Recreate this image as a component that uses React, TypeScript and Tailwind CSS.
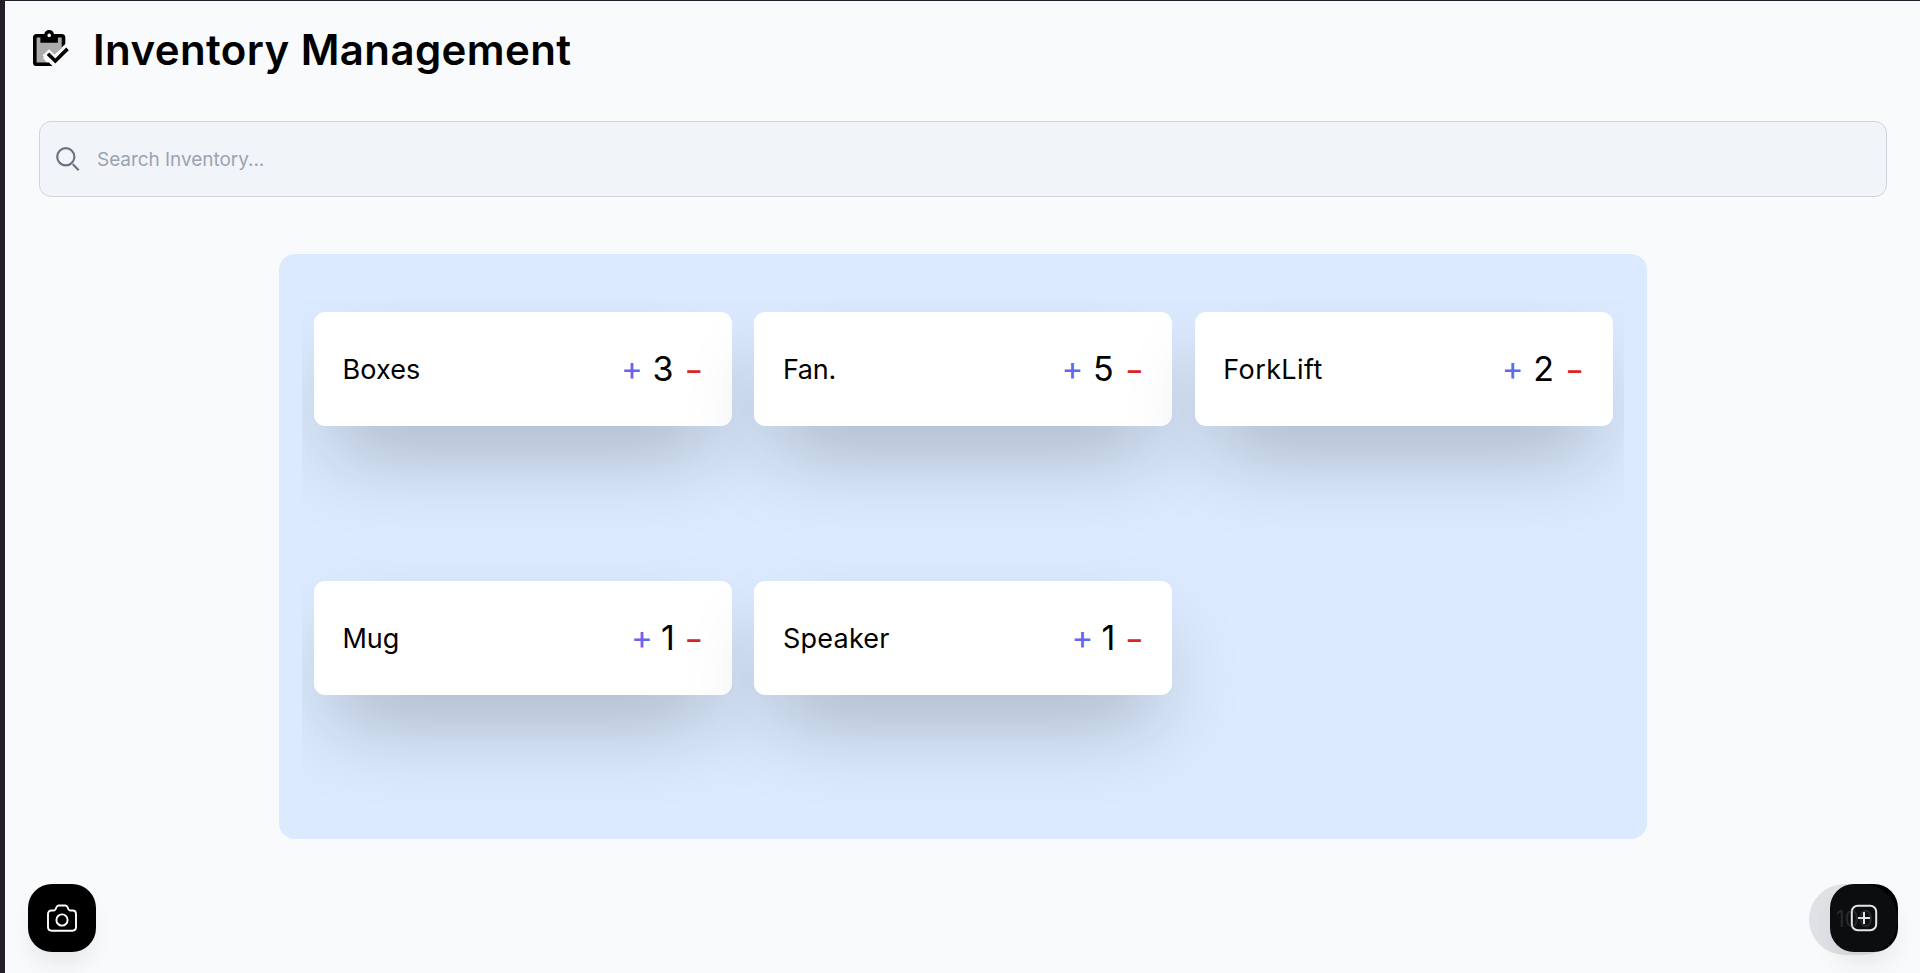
const items = [
  { name: 'Boxes', qty: 3, nameClass: 'tracking-[0.1px]', qtyClass: 'w-[44px]' },
  { name: 'Fan.', qty: 5, nameClass: 'tracking-[-0.3px]', qtyClass: 'w-[44px]' },
  { name: 'ForkLift', qty: 2, nameClass: 'tracking-[0.4px]', qtyClass: 'w-[44px]' },
  { name: 'Mug', qty: 1, nameClass: 'tracking-[-0.1px]', qtyClass: 'w-[34px]' },
  { name: 'Speaker', qty: 1, nameClass: 'tracking-[0.25px]', qtyClass: 'w-[34px]' },
];

function ClipboardIcon() {
  return (
    <svg className="mt-px" width="36" height="37" viewBox="0 0 36 37" fill="none">
      <path d="M3 7h26v11l-8 7-4-4-7 7 5 6H3z" fill="#ababac" />
      <path
        d="M32.300 14V7.500a3.600 3.600 0 0 0-3.600-3.600H21a5 5 0 0 0-9.700 0H3.600A3.600 3.600 0 0 0 0 7.500v24.900A3.600 3.600 0 0 0 3.600 36h15.900L16 32.500H3.600V7.500h3.800v5.300h17.500V7.500h3.800v10zM16.200 7.200a1.800 1.800 0 1 1 0-3.600 1.800 1.800 0 0 1 0 3.600z"
        fill="#000"
        fillRule="evenodd"
      />
      <path d="M9.500 25.500L16 19.200l6.300 6L33.500 13.500 36 16v6L21.500 37z" fill="#f9fafc" />
      <path d="M15 23.800l7.300 7.200L34.500 18.900" stroke="#000" strokeWidth="3.600" />
    </svg>
  );
}

export default function App() {
  return (
    <div className="relative h-[973px] w-[1920px] overflow-hidden border-l-[5px] border-t border-[#231f2b] bg-[#f9fafc] font-['Inter','Liberation_Sans',sans-serif] text-black">
      <header className="flex h-[100px] items-start gap-[24px] pl-7 pt-[28px]">
        <ClipboardIcon />
        <h1 className="whitespace-nowrap text-[42px] font-semibold leading-[42px] tracking-[0.4px]">Inventory Management</h1>
      </header>
      <div className="ml-[34px] mt-5 flex h-[76px] w-[1848px] items-center rounded-xl border border-[#d1d5db] bg-[#f1f4f9] pl-4">
        <svg width="24" height="24" viewBox="0 0 24 24" fill="none" stroke="#6b7280" strokeWidth="2.200">
          <circle cx="9.800" cy="9.800" r="8.600" />
          <path d="M16.800 17.200l5.900 6" />
        </svg>
        <span className="ml-[17px] pt-0.5 text-[19px] tracking-[-0.05px] text-[#9ca3af]">Search Inventory...</span>
      </div>
      <main className="ml-[274px] mt-[57px] h-[585px] w-[1368px] rounded-2xl bg-[#dbeafe] px-[23px] pt-[46px]">
        <div className="grid h-[539px] grid-cols-3 content-start gap-x-[22.5px] gap-y-[155px] overflow-hidden py-3 pl-3 pr-[11.3px]">
          {items.map((item) => (
            <div
              key={item.name}
              className="flex h-[114px] items-center rounded-[11px] bg-white pl-[28.5px] pr-[29px] shadow-[0_41px_84px_-18px_rgba(0,0,0,0.25)]"
            >
              <span className={`pt-0.5 text-[27px] ${item.nameClass}`}>{item.name}</span>
              <div className="ml-auto flex items-center">
                <button className="flex w-[18px] justify-center pb-px text-[33px] leading-none text-[#6366f1]">+</button>
                <span className={`text-center text-[34px] leading-none ${item.qtyClass}`}>{item.qty}</span>
                <button className="flex w-[18px] justify-center pt-px text-[28px] font-medium leading-none text-[#dc2626]">−</button>
              </div>
            </div>
          ))}
        </div>
      </main>
      <button className="absolute left-[23px] top-[883px] flex size-[68px] items-center justify-center rounded-3xl bg-black shadow-[0_15px_22px_-4px_rgba(0,0,0,0.08)]">
        <svg width="30" height="30" viewBox="0 0 30 30" fill="none" stroke="#fff" strokeWidth="1.900">
          <path d="M4.500 7.500h2.200c1 0 1.400-.4 1.900-1.400l.9-2c.6-1.100 1.200-1.600 2.300-1.600h6.400c1.100 0 1.700.5 2.300 1.600l.9 2c.5 1 .9 1.400 1.900 1.400h2.200c2.200 0 3.500 1.300 3.500 3.500v13c0 2.400-1.300 3.700-3.700 3.700H4.700C2.300 27.700 1 26.400 1 24V11c0-2.200 1.300-3.500 3.500-3.500z" />
          <circle cx="15" cy="17" r="5.600" />
        </svg>
      </button>
      <button className="absolute left-[1825px] top-[883px] flex size-[68px] items-center justify-center rounded-3xl bg-black shadow-[0_15px_22px_-4px_rgba(0,0,0,0.08)]">
        <svg width="28" height="28" viewBox="0 0 28 28" fill="none" stroke="#fff" strokeWidth="2">
          <rect x="1.800" y="1.800" width="24.400" height="24.400" rx="6" />
          <path d="M14 8v12M8 14h12" />
        </svg>
      </button>
      <div className="absolute left-[1804px] top-[883px] flex h-[71px] w-[89px] items-center justify-center rounded-full bg-[#4b5563]/15 pl-px text-[23px] tracking-[-0.5px] text-[#888]/25">
        100
      </div>
    </div>
  );
}
